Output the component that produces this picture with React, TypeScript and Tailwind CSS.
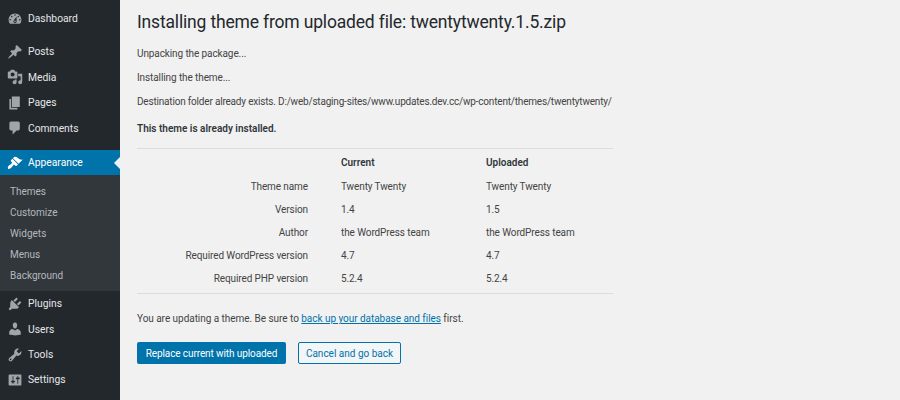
import type { ReactNode } from 'react'

const Icon = ({ d }: { d: string }) => (
  <svg viewBox="0 0 20 20" className="w-[16px] h-[16px]" fill="currentColor">
    <path d={d} />
  </svg>
)

const icons = {
  dashboard: 'M3.76 16h12.48c1.1-1.37 1.76-3.11 1.76-5 0-4.42-3.58-8-8-8s-8 3.58-8 8c0 1.89.66 3.63 1.76 5zM10 4c.55 0 1 .45 1 1s-.45 1-1 1-1-.45-1-1 .45-1 1-1zM6 6c.55 0 1 .45 1 1s-.45 1-1 1-1-.45-1-1 .45-1 1-1zm8 0c.55 0 1 .45 1 1s-.45 1-1 1-1-.45-1-1 .45-1 1-1zm-5.37 5.55L12 7v6c0 1.1-.9 2-2 2s-2-.9-2-2c0-.57.24-1.08.63-1.45zM4 10c.55 0 1 .45 1 1s-.45 1-1 1-1-.45-1-1 .45-1 1-1zm12 0c.55 0 1 .45 1 1s-.45 1-1 1-1-.45-1-1 .45-1 1-1zm-5 3c0-.55-.45-1-1-1s-1 .45-1 1 .45 1 1 1 1-.45 1-1z',
  posts: 'M10.44 3.02l1.82-1.82 6.36 6.35-1.83 1.82c-1.05-.68-2.48-.57-3.41.36l-.75.75c-.92.93-1.04 2.35-.35 3.41l-1.83 1.82-2.41-2.41-2.8 2.79c-.42.42-3.38 2.71-3.8 2.29s1.86-3.39 2.28-3.81l2.79-2.79L4.1 9.36l1.83-1.82c1.05.69 2.48.57 3.4-.36l.75-.75c.93-.92 1.05-2.35.36-3.41z',
  media: 'M13 11V4c0-.55-.45-1-1-1h-1.67L9 1H5L3.67 3H2c-.55 0-1 .45-1 1v7c0 .55.45 1 1 1h10c.55 0 1-.45 1-1zM7 4.5c1.38 0 2.5 1.12 2.5 2.5S8.38 9.5 7 9.5 4.5 8.38 4.5 7 5.62 4.5 7 4.5zM14 6h5v10.5c0 1.38-1.12 2.5-2.5 2.5S14 17.88 14 16.5s1.12-2.5 2.5-2.5c.17 0 .34.02.5.05V9h-3V6zm-4 8.05V13h2v3.5c0 1.38-1.12 2.5-2.5 2.5S7 17.88 7 16.5 8.12 14 9.5 14c.17 0 .34.02.5.05z',
  pages: 'M6 15V2h10v13H6zm-1 1h8v2H3V5h2v11z',
  comments: 'M5 2h9c1.1 0 2 .9 2 2v7c0 1.1-.9 2-2 2h-2l-5 5v-5H5c-1.1 0-2-.9-2-2V4c0-1.1.9-2 2-2z',
  appearance: 'M14.48 11.06L7.41 3.99l1.5-1.5c.5-.56 2.3-.47 3.51.32 1.21.8 1.43 1.28 2.91 2.1 1.18.64 2.45 1.26 4.45.85zm-.71.71L6.7 4.7 4.93 6.47c-.39.39-.39 1.02 0 1.41l1.06 1.06c.39.39.39 1.03 0 1.42-.6.6-1.43 1.11-2.21 1.69-.35.26-.7.53-1.01.84C1.43 14.23.4 16.08 1.4 17.07c.99 1 2.84-.03 4.18-1.36.31-.31.58-.66.85-1.02.57-.78 1.08-1.61 1.69-2.21.39-.39 1.02-.39 1.41 0l1.06 1.06c.39.39 1.02.39 1.41 0z',
  plugins: 'M13.11 4.36L9.87 7.6 8 5.73l3.24-3.24c.35-.34 1.05-.2 1.56.32.52.51.66 1.21.31 1.55zm-8 1.77l.91-1.12 9.01 9.01-1.19.84c-.71.71-2.63 1.16-3.82 1.16H6.14L4.9 17.26c-.59.59-1.54.59-2.12 0-.59-.58-.59-1.53 0-2.12l1.24-1.24v-3.88c0-1.13.4-3.19 1.09-3.89zm7.26 3.97l3.24-3.24c.34-.35 1.04-.21 1.55.31.52.51.66 1.21.31 1.55l-3.24 3.25z',
  users: 'M10 9.25c-2.27 0-2.73-3.44-2.73-3.44C7 4.02 7.82 2 9.97 2c2.16 0 2.98 2.02 2.71 3.81 0 0-.41 3.44-2.68 3.44zm0 2.57L12.72 10c2.39 0 4.52 2.33 4.52 4.53v2.49s-3.65 1.13-7.24 1.13c-3.65 0-7.24-1.13-7.24-1.13v-2.49c0-2.25 1.94-4.48 4.47-4.48z',
  tools: 'M16.68 9.77c-1.34 1.34-3.3 1.67-4.95.99l-5.41 6.52c-.99.99-2.59.99-3.58 0s-.99-2.59 0-3.57l6.52-5.42c-.68-1.65-.35-3.61.99-4.95 1.28-1.28 3.12-1.62 4.72-1.06l-2.89 2.89 2.82 2.82 2.86-2.87c.53 1.58.18 3.39-1.08 4.65zM3.81 16.21c.4.39 1.04.39 1.43 0 .4-.4.4-1.04 0-1.43-.39-.4-1.03-.4-1.43 0-.39.39-.39 1.03 0 1.43z',
  settings: 'M18 16V4c0-.55-.45-1-1-1H3c-.55 0-1 .45-1 1v12c0 .55.45 1 1 1h14c.55 0 1-.45 1-1zM8 11h1c.55 0 1 .45 1 1s-.45 1-1 1H8v1.5c0 .28-.22.5-.5.5s-.5-.22-.5-.5V13H6c-.55 0-1-.45-1-1s.45-1 1-1h1V5.5c0-.28.22-.5.5-.5s.5.22.5.5V11zm5-2h-1c-.55 0-1-.45-1-1s.45-1 1-1h1V5.5c0-.28.22-.5.5-.5s.5.22.5.5V7h1c.55 0 1 .45 1 1s-.45 1-1 1h-1v5.5c0 .28-.22.5-.5.5s-.5-.22-.5-.5V9z',
}

const MenuRow = ({ icon, label, active }: { icon: ReactNode; label: string; active?: boolean }) => (
  <div className={`relative flex items-center h-[25.4px] pl-[7px] ${active ? 'bg-[#0073aa] text-white' : 'text-[#e4e6e8]'}`}>
    <span className={`w-[21px] flex items-center ${active ? 'text-white' : 'text-[#a0a5aa]'}`}>{icon}</span>
    <span>{label}</span>
    {active && (
      <span className="absolute right-0 top-[7px] border-y-[6px] border-r-[6px] border-y-transparent border-r-[#f1f1f1]" />
    )}
  </div>
)

const rows = [
  ['Theme name', 'Twenty Twenty', 'Twenty Twenty'],
  ['Version', '1.4', '1.5'],
  ['Author', 'the WordPress team', 'the WordPress team'],
  ['Required WordPress version', '4.7', '4.7'],
  ['Required PHP version', '5.2.4', '5.2.4'],
]

export default function App() {
  return (
    <div className="flex w-[900px] h-[400px] overflow-hidden bg-[#f1f1f1] text-[#444] text-[10px] font-['Roboto',sans-serif]">
      <aside className="w-[120px] shrink-0 bg-[#23282d] pt-[6px] text-[10.3px]">
        <MenuRow icon={<Icon d={icons.dashboard} />} label="Dashboard" />
        <div className="mt-[8px]">
          <MenuRow icon={<Icon d={icons.posts} />} label="Posts" />
          <MenuRow icon={<Icon d={icons.media} />} label="Media" />
          <MenuRow icon={<Icon d={icons.pages} />} label="Pages" />
          <MenuRow icon={<Icon d={icons.comments} />} label="Comments" />
        </div>
        <div className="mt-[9px]">
          <MenuRow icon={<Icon d={icons.appearance} />} label="Appearance" active />
          <div className="bg-[#32373c] pt-[5.5px] pb-[5.5px] pl-[10px] text-[#b4b9be] text-[10px]">
            {['Themes', 'Customize', 'Widgets', 'Menus', 'Background'].map((s) => (
              <div key={s} className="h-[21px] flex items-center">{s}</div>
            ))}
          </div>
          <MenuRow icon={<Icon d={icons.plugins} />} label="Plugins" />
          <MenuRow icon={<Icon d={icons.users} />} label="Users" />
          <MenuRow icon={<Icon d={icons.tools} />} label="Tools" />
          <MenuRow icon={<Icon d={icons.settings} />} label="Settings" />
        </div>
      </aside>

      <main className="pl-[17px] w-[476px] box-content">
        <h1 className="text-[17.5px] tracking-[-0.17px] leading-[24px] mt-[10px] text-[#23282d] whitespace-nowrap">Installing theme from uploaded file: twentytwenty.1.5.zip</h1>
        <p className="mt-[12px] leading-[16px] h-[16px] tracking-[-0.1px]">Unpacking the package...</p>
        <p className="mt-[8px] leading-[16px] h-[16px] tracking-[-0.1px]">Installing the theme...</p>
        <p className="mt-[8px] leading-[16px] h-[16px] tracking-[-0.19px] whitespace-nowrap">Destination folder already exists. D:/web/staging-sites/www.updates.dev.cc/wp-content/themes/twentytwenty/</p>
        <p className="mt-[11px] leading-[16px] h-[16px] font-semibold text-[#32373c]">This theme is already installed.</p>

        <div className="mt-[11px] border-y border-[#dcdcde] pb-[3px]">
          <div className="grid grid-cols-[171px_145px_1fr] h-[26px] pt-[1px] items-center font-semibold text-[#32373c]">
            <span className="pl-[33px] col-start-2">Current</span>
            <span className="pl-[33px]">Uploaded</span>
          </div>
          {rows.map((r) => (
            <div key={r[0]} className="grid grid-cols-[171px_145px_1fr] h-[23.1px] items-center tracking-[-0.1px]">
              <span className="text-right whitespace-nowrap">{r[0]}</span>
              <span className="pl-[33px]">{r[1]}</span>
              <span className="pl-[33px]">{r[2]}</span>
            </div>
          ))}
        </div>

        <p className="mt-[17px] leading-[16px] tracking-[-0.04px] whitespace-nowrap">
          You are updating a theme. Be sure to <a className="text-[#0073aa] underline">back up your database and files</a> first.
        </p>
        <div className="flex gap-[12px] mt-[15px]">
          <button className="h-[22px] w-[149px] rounded-[2px] bg-[#0073aa] text-white tracking-[-0.1px] whitespace-nowrap">Replace current with uploaded</button>
          <button className="h-[22px] w-[103px] rounded-[2px] border border-[#0073aa] bg-[#f3f5f6] text-[#0073aa] whitespace-nowrap">Cancel and go back</button>
        </div>
      </main>
    </div>
  )
}
